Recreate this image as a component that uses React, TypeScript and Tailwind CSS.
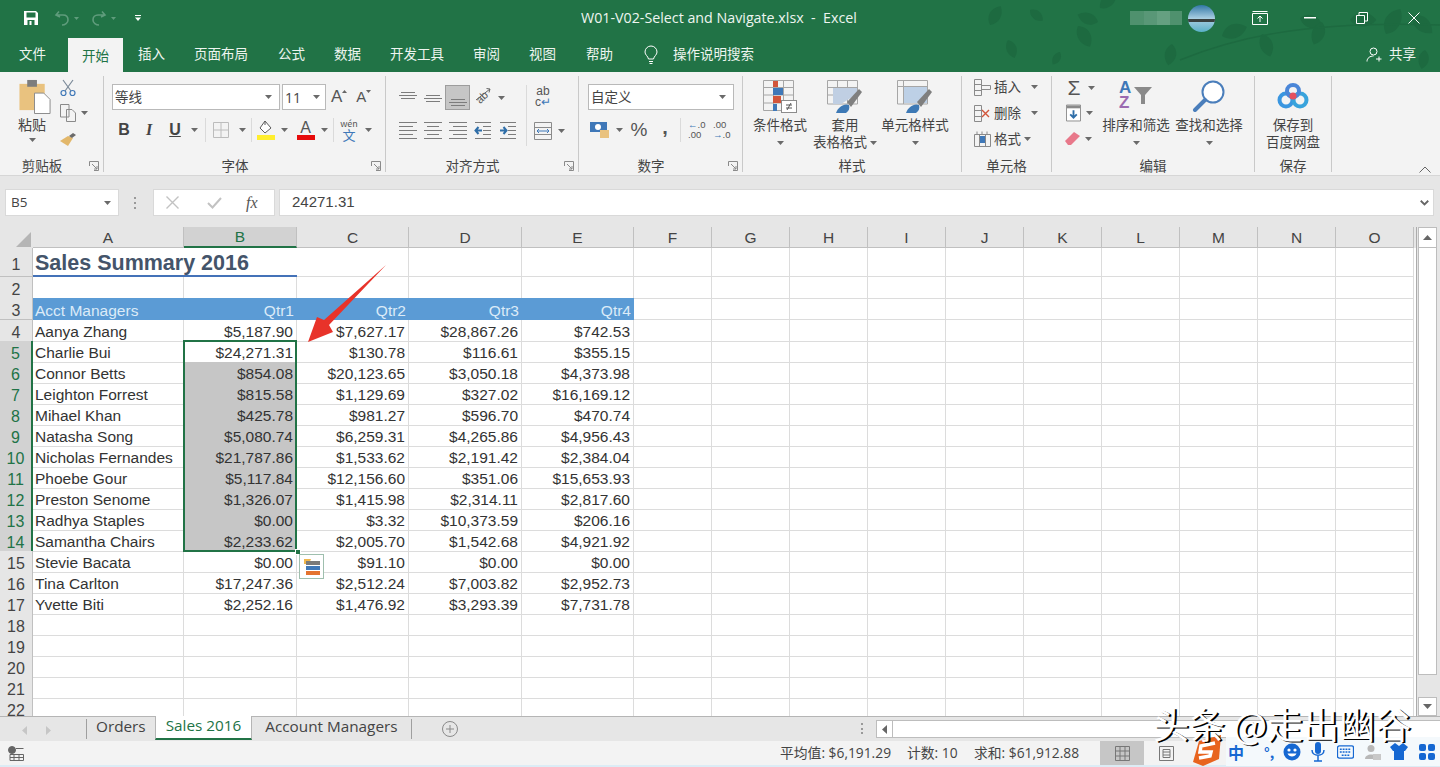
const leaves = [
  [990, 25, 300, 0.9], [1008, 40, 70, 0.8], [1030, 10, 40, 0.7], [1078, 26, 60, 1], [1098, 22, 200, 0.9],
  [1100, 8, 320, 0.9], [1172, 44, 100, 0.9], [1222, 36, 340, 1.1], [1262, 34, 70, 1], [1300, 18, 20, 1],
  [1322, 22, 110, 1], [1350, 20, 0, 1.1], [1386, 34, 300, 1.2], [1412, 16, 40, 1.1], [1425, 50, 100, 0.8], [1060, 52, 120, 0.6],
];

const names = [
  ['Aanya Zhang', '$5,187.90', '$7,627.17', '$28,867.26', '$742.53'],
  ['Charlie Bui', '$24,271.31', '$130.78', '$116.61', '$355.15'],
  ['Connor Betts', '$854.08', '$20,123.65', '$3,050.18', '$4,373.98'],
  ['Leighton Forrest', '$815.58', '$1,129.69', '$327.02', '$16,169.12'],
  ['Mihael Khan', '$425.78', '$981.27', '$596.70', '$470.74'],
  ['Natasha Song', '$5,080.74', '$6,259.31', '$4,265.86', '$4,956.43'],
  ['Nicholas Fernandes', '$21,787.86', '$1,533.62', '$2,191.42', '$2,384.04'],
  ['Phoebe Gour', '$5,117.84', '$12,156.60', '$351.06', '$15,653.93'],
  ['Preston Senome', '$1,326.07', '$1,415.98', '$2,314.11', '$2,817.60'],
  ['Radhya Staples', '$0.00', '$3.32', '$10,373.59', '$206.16'],
  ['Samantha Chairs', '$2,233.62', '$2,005.70', '$1,542.68', '$4,921.92'],
  ['Stevie Bacata', '$0.00', '$91.10', '$0.00', '$0.00'],
  ['Tina Carlton', '$17,247.36', '$2,512.24', '$7,003.82', '$2,952.73'],
  ['Yvette Biti', '$2,252.16', '$1,476.92', '$3,293.39', '$7,731.78'],
];

const gridCols = 'grid grid-cols-[33px_151px_113px_112px_113px_112px_78px_78px_78px_78px_78px_78px_78px_78px_78px_78px]';
const columns = ['A', 'B', 'C', 'D', 'E', 'F', 'G', 'H', 'I', 'J', 'K', 'L', 'M', 'N', 'O'];

const Caret = ({ className = '' }: { className?: string }) => (
  <svg viewBox="0 0 7 4" className={`h-[4px] w-[7px] shrink-0 ${className}`}>
    <path d="M0 0H7L3.5 4Z" fill="#6a6a6a" />
  </svg>
);

const Launcher = () => (
  <svg viewBox="0 0 10 10" className="absolute bottom-[4px] right-[4px] h-[10px] w-[10px]" fill="none" stroke="#8a8a8a">
    <path d="M.5 5V.5H9.5V9.5H5M3 3L8 8M8 5V8H5" />
  </svg>
);

const Sep = () => <div className="mt-[4px] h-[96px] w-px shrink-0 bg-[#c9c9c9]" />;
const MiniSep = () => <div className="h-[24px] w-px shrink-0 bg-[#dadada]" />;

const Group = ({ className, label, launcher, children }: { className: string; label: string; launcher?: boolean; children: React.ReactNode }) => (
  <div className={`relative h-full shrink-0 ${className}`}>
    <div className="flow-root h-[84px]">{children}</div>
    <div className={`h-[20px] text-center leading-[20px] text-[#444] ${launcher ? 'pr-[19px]' : ''}`}>{label}</div>
    {launcher && <Launcher />}
  </div>
);

const Lines = ({ rows }: { rows: [number, number, number][] }) => (
  <svg viewBox="0 0 18 18" className="h-[18px] w-[18px]" stroke="#7c7c7c" strokeWidth="1">
    {rows.map(([x1, x2, y], i) => <line key={i} x1={x1} x2={x2} y1={y + 0.5} y2={y + 0.5} />)}
  </svg>
);

const Indent = ({ flip }: { flip?: boolean }) => (
  <svg viewBox="0 0 18 18" className="h-[18px] w-[18px]" stroke="#7c7c7c">
    <path d="M1 1.5H17M9 5.5H17M9 9.5H17M9 13.5H17M1 17.5H17" />
    <path d={flip ? 'M8 9.5H2M4.5 6L1.5 9.5L4.5 13' : 'M1 9.5H7M4.5 6L7.5 9.5L4.5 13'} stroke="#2f6ea8" strokeWidth="2" fill="none" />
  </svg>
);

const Slot = ({ className, children }: { className: string; children: React.ReactNode }) => (
  <span className={`flex shrink-0 items-center justify-center ${className}`}>{children}</span>
);

const BigButton = ({ className, icon, lines, caretInline }: { className: string; icon: React.ReactNode; lines: string[]; caretInline?: boolean }) => (
  <div className={`flex shrink-0 flex-col items-center pt-[8px] leading-[17px] text-[#444] ${className}`}>
    <div className="flex h-[37px] items-start justify-center">{icon}</div>
    {lines.map((l, i) => (
      <div key={i} className="flex items-center gap-[3px] whitespace-nowrap">
        {l}
        {caretInline && i === 1 && <Caret />}
      </div>
    ))}
    {lines.length === 1 && <div className="flex h-[17px] items-center"><Caret /></div>}
  </div>
);

const CondIcon = () => (
  <svg viewBox="0 0 34 36" className="h-[36px] w-[34px]" fill="none">
    <path d="M.5.5H30.5V30.5H.5ZM.5 7.5H30.5M.5 15H30.5M.5 23H30.5M10.5.5V30.5M20.5.5V30.5" stroke="#a6a6a6" />
    <rect x="10" y="1" width="5" height="6" fill="#d2553a" />
    <rect x="10" y="8" width="10" height="7" fill="#3f78b8" />
    <rect x="10" y="16" width="8" height="7" fill="#d2553a" />
    <rect x="10" y="24" width="4" height="7" fill="#3f78b8" />
    <rect x="18.5" y="20.5" width="15" height="12" fill="#fff" stroke="#8c8c8c" />
    <path d="M23 25H29M23 28H29M28 23L24 30" stroke="#555" />
  </svg>
);

const TableBrush = () => (
  <svg viewBox="0 0 36 36" className="h-[36px] w-[36px]" fill="none">
    <path d="M.5.5H30.5V24H.5ZM.5 7.5H30.5M.5 15H30.5M10.5.5V24M20.5.5V24" stroke="#a6a6a6" />
    <path d="M6 8H30V14L14 24H6Z" fill="#c0cfe3" />
    <path d="M20 22L32 9L35 12L24 27Z" fill="#7f7f7f" />
    <path d="M9 33C11 27 17 23 22 25C23 28 22 31 19 33Z" fill="#3e79b5" />
  </svg>
);

const CellBrush = () => (
  <svg viewBox="0 0 36 36" className="h-[36px] w-[36px]" fill="none">
    <path d="M.5.5H30.5V24H.5ZM.5 6.5H30.5M6.5.5V24" stroke="#a6a6a6" />
    <rect x="7" y="7" width="23" height="16" fill="#bdd0e6" />
    <path d="M20 22L32 9L35 12L24 27Z" fill="#7f7f7f" />
    <path d="M9 33C11 27 17 23 22 25C23 28 22 31 19 33Z" fill="#3e79b5" />
  </svg>
);

export default function App() {
  return (
    <div className="relative flex h-screen w-full flex-col overflow-hidden bg-white font-['Open_Sans','Noto_Sans_CJK_SC',sans-serif] text-[13.5px]">
      {/* Title bar + tabs */}
      <div className="relative h-[72px] shrink-0 bg-[#217346] text-[#eef5f0]">
        <svg viewBox="0 0 1440 72" className="absolute inset-0 h-[72px] w-[1440px]" fill="#1d6a40">
          {leaves.map(([x, y, r, s], i) => (
            <path key={i} d="M0 0C6 -9 17 -9 24 0C17 8 6 8 0 0Z" transform={`translate(${x} ${y}) rotate(${r}) scale(${s})`} />
          ))}
          <path d="M1180 60C1230 40 1300 20 1440 25" fill="none" stroke="#1d6a40" strokeWidth="1.5" />
        </svg>
        <div className="relative flex h-[36px] items-center">
          <div className="flex items-center pl-[23px]">
            <svg viewBox="0 0 16 16" className="h-[16px] w-[16px]" fill="none">
              <path d="M1 1H13L15 3V15H1Z" fill="#fff" />
              <rect x="3.5" y="2.5" width="9" height="5" fill="#217346" />
              <rect x="4.5" y="10" width="7" height="5" fill="#217346" />
              <rect x="6.5" y="11" width="2" height="4" fill="#fff" />
            </svg>
            <svg viewBox="0 0 16 16" className="ml-[15px] h-[16px] w-[16px]" fill="none" stroke="#5f9c7c" strokeWidth="1.6">
              <path d="M5 1.5L2 5L6 7M2.5 5H9C12 5 14 7 14 10S11 15 8 15" />
            </svg>
            <svg viewBox="0 0 5 3" className="ml-[4px] h-[3px] w-[5px]" fill="#5f9c7c"><path d="M0 0H5L2.5 3Z" /></svg>
            <svg viewBox="0 0 16 16" className="ml-[12px] h-[16px] w-[16px]" fill="none" stroke="#5f9c7c" strokeWidth="1.6">
              <path d="M11 1.5L14 5L10 7M13.5 5H7C4 5 2 7 2 10S5 15 8 15" />
            </svg>
            <svg viewBox="0 0 5 3" className="ml-[4px] h-[3px] w-[5px]" fill="#5f9c7c"><path d="M0 0H5L2.5 3Z" /></svg>
            <svg viewBox="0 0 6 6" className="ml-[19px] h-[6px] w-[6px]" fill="#fff"><path d="M0 0H6V1H0ZM0 2.5H6L3 6Z" /></svg>
          </div>
          <div className="absolute left-[581px] top-[6px] whitespace-pre text-[14.25px] leading-[24px]">W01-V02-Select and Navigate.xlsx  -  Excel</div>
          <div className="ml-auto flex items-center">
            <div className="flex h-[14px] w-[52px] items-stretch opacity-60">
              <div className="w-[14px] bg-[#6fa58a]" />
              <div className="w-[13px] bg-[#7fb098]" />
              <div className="w-[13px] bg-[#93bfa9]" />
              <div className="w-[12px] bg-[#6fa58a]" />
            </div>
            <div className="ml-[6px] h-[27px] w-[27px] overflow-hidden rounded-full bg-gradient-to-b from-[#2f78a6] via-[#a9cfe2] to-[#58b0c8]">
              <div className="mt-[14px] h-[3px] w-full bg-[#39403f]" />
            </div>
            <svg viewBox="0 0 16 14" className="ml-[37px] h-[14px] w-[16px]" fill="none" stroke="#fff">
              <path d="M.5 2.5H15.5V13.5H.5ZM.5.5H15.5M8 11V5M5.5 7.5L8 5L10.5 7.5" />
            </svg>
            <svg viewBox="0 0 12 2" className="ml-[36px] h-[2px] w-[12px]"><rect width="12" height="1.5" fill="#fff" /></svg>
            <svg viewBox="0 0 12 12" className="ml-[40px] h-[12px] w-[12px]" fill="none" stroke="#fff">
              <path d="M.5 3.5H8.5V11.5H.5ZM3 3V.5H11.5V9H9" />
            </svg>
            <svg viewBox="0 0 12 12" className="ml-[40px] mr-[20px] h-[12px] w-[12px]" fill="none" stroke="#fff">
              <path d="M.5.5L11.5 11.5M11.5.5L.5 11.5" />
            </svg>
          </div>
        </div>
        <div className="relative flex h-[36px] items-end pl-[5px]">
          <div className="mr-[8px] px-[14px] pb-[8px]">文件</div>
          <div className="h-[34px] bg-[#f3f3f3] px-[14px] pt-[8px] text-[#217346]">开始</div>
          <div className="ml-px px-[14px] pb-[8px]">插入</div>
          <div className="ml-px px-[14px] pb-[8px]">页面布局</div>
          <div className="ml-[2px] px-[14px] pb-[8px]">公式</div>
          <div className="ml-px px-[14px] pb-[8px]">数据</div>
          <div className="ml-px px-[14px] pb-[8px]">开发工具</div>
          <div className="ml-px px-[14px] pb-[8px]">审阅</div>
          <div className="ml-px px-[14px] pb-[8px]">视图</div>
          <div className="ml-[2px] px-[14px] pb-[8px]">帮助</div>
          <svg viewBox="0 0 16 20" className="mb-[7px] ml-[16px] h-[20px] w-[16px]" fill="none" stroke="#fff">
            <path d="M5.5 14C5 11 2 10 2 7A6 6 0 0 1 14 7C14 10 11 11 10.5 14ZM6 16.5H10M6.5 18.5H9.5" />
          </svg>
          <div className="ml-[14px] pb-[8px]">操作说明搜索</div>
          <div className="ml-auto flex items-center pb-[8px] pr-[24px]">
            <svg viewBox="0 0 16 16" className="mr-[7px] h-[16px] w-[16px]" fill="none" stroke="#fff">
              <path d="M4 5.5A3.5 3.5 0 1 1 11 5.5A3.5 3.5 0 1 1 4 5.5ZM1 15.5C1 12 4 10 7.5 10M10 13H15.5M13 10.5V15.5" />
            </svg>
            共享
          </div>
        </div>
      </div>

      {/* Ribbon */}
      <div className="relative flex h-[104px] shrink-0 border-b border-[#d6d6d6] bg-[#f3f3f3]">
        <Group className="w-[103px]" label="剪贴板" launcher>
          <div className="flex">
            <div className="flex w-[57px] flex-col items-center pl-[7px] pt-[7px] leading-[17px] text-[#444]">
              <svg viewBox="0 0 32 36" className="ml-[5px] h-[35px] w-[32px]">
                <path d="M0 5H26V32H0Z" fill="#e9c27f" />
                <rect x="8" y="1" width="10" height="7" fill="#7d7d7d" />
                <path d="M15.5 14.5H25L31.5 21V35.5H15.5Z" fill="#fff" stroke="#8a8a8a" />
              </svg>
              <div className="mt-[2px] text-[14px]">粘贴</div>
              <Caret className="mt-[5px]" />
            </div>
            <div className="flex w-[46px] flex-col pl-[1px] pt-[7px]">
              <svg viewBox="0 0 16 18" className="ml-[2px] h-[18px] w-[16px]" fill="none" stroke="#7c8a99" strokeWidth="1.2">
                <path d="M3 1L11 12M13 1L5 12" />
                <circle cx="3.5" cy="14" r="2.5" stroke="#3f78b8" />
                <circle cx="12.5" cy="14" r="2.5" stroke="#3f78b8" />
              </svg>
              <div className="mt-[7px] flex items-center gap-[5px]">
                <svg viewBox="0 0 16 18" className="ml-[2px] h-[18px] w-[16px]" fill="none" stroke="#8a8a8a">
                  <path d="M.5.5H9V13H.5ZM6.5 5.5H12L15.5 9V17.5H6.5Z" fill="#f3f3f3" />
                </svg>
                <Caret />
              </div>
              <svg viewBox="0 0 18 16" className="ml-[1px] mt-[10px] h-[16px] w-[18px]">
                <path d="M1 9L9 14L14 6L9 4Z" fill="#e2b76a" />
                <path d="M10 4L14 1L17 3L13 6Z" fill="#6a6a6a" />
              </svg>
            </div>
          </div>
        </Group>
        <Sep />

        <Group className="w-[281px]" label="字体" launcher>
          <div className="mt-[12px] flex h-[26px] items-center pl-[8px] text-[#444]">
            <div className="flex h-[26px] w-[168px] items-center justify-between border border-[#b9b9b9] bg-white pl-[2px] pr-[7px]">等线<Caret /></div>
            <div className="ml-[2px] flex h-[26px] w-[44px] items-center justify-between border border-[#b9b9b9] bg-white pl-[2px] pr-[5px] text-[14px]">11<Caret /></div>
            <div className="ml-[5px] flex items-start">
              <span className="font-['Liberation_Sans'] text-[17px] leading-[20px] text-[#555]">A</span>
              <svg viewBox="0 0 5 3" className="mt-[3px] h-[3px] w-[5px]" fill="#666"><path d="M0 3H5L2.5 0Z" /></svg>
              <span className="ml-[9px] font-['Liberation_Sans'] text-[15px] leading-[20px] text-[#555]">A</span>
              <svg viewBox="0 0 5 3" className="mt-[3px] h-[3px] w-[5px]" fill="#666"><path d="M0 0H5L2.5 3Z" /></svg>
            </div>
          </div>
          <div className="mt-[8px] flex h-[24px] items-center pl-[8px] font-['Liberation_Sans'] text-[16px] text-[#444]">
            <Slot className="w-[24px]"><b>B</b></Slot>
            <Slot className="w-[26px]"><i className="font-['Liberation_Serif'] font-bold">I</i></Slot>
            <Slot className="w-[26px]"><span className="font-bold underline">U</span></Slot>
            <Slot className="w-[12px]"><Caret /></Slot>
            <Slot className="ml-[5px] w-[1px]"><MiniSep /></Slot>
            <Slot className="ml-[6px] w-[18px]">
              <svg viewBox="0 0 16 16" className="h-[16px] w-[16px]" fill="none" stroke="#bcbcbc"><path d="M.5.5H15.5V15.5H.5ZM8 .5V15.5M.5 8H15.5" /></svg>
            </Slot>
            <Slot className="ml-[6px] w-[13px]"><Caret /></Slot>
            <Slot className="ml-[2px] w-[1px]"><MiniSep /></Slot>
            <Slot className="ml-[4px] w-[20px]">
              <svg viewBox="0 0 18 20" className="h-[20px] w-[18px]" fill="none">
                <path d="M8 1L14 8L8 13L3 8Z" stroke="#5b5b5b" fill="#fff" />
                <path d="M8 1V5" stroke="#5b5b5b" />
                <rect y="15" width="18" height="5" fill="#ffee2e" />
              </svg>
            </Slot>
            <Slot className="ml-[3px] w-[10px]"><Caret /></Slot>
            <Slot className="ml-[7px] w-[19px]">
              <div className="flex flex-col items-center leading-[13px]">
                <span className="text-[16px] text-[#555]">A</span>
                <div className="mt-[1px] h-[5px] w-[18px] bg-[#e60b0b]" />
              </div>
            </Slot>
            <Slot className="ml-[4px] w-[10px]"><Caret /></Slot>
            <Slot className="ml-[4px] w-[1px]"><MiniSep /></Slot>
            <Slot className="ml-[5px] w-[20px]">
              <div className="flex flex-col items-center font-['Noto_Sans_CJK_SC'] leading-none">
                <span className="text-[9px] leading-[9px] text-[#555]">wén</span>
                <span className="text-[13px] leading-[13px] text-[#3f78b8]">文</span>
              </div>
            </Slot>
            <Slot className="ml-[4px] w-[10px]"><Caret /></Slot>
          </div>
        </Group>
        <Sep />

        <Group className="w-[192px]" label="对齐方式" launcher>
          <div className="flex">
            <div className="w-[140px] pl-[9px]">
              <div className="mt-[13px] flex h-[25px] items-center">
                <Slot className="w-[25px]"><Lines rows={[[2, 16, 3], [0, 18, 6], [2, 16, 9]]} /></Slot>
                <Slot className="w-[25px]"><Lines rows={[[2, 16, 6], [0, 18, 9], [2, 16, 12]]} /></Slot>
                <Slot className="h-[25px] w-[25px] border border-[#9d9d9d] bg-[#c6c6c6]"><Lines rows={[[2, 16, 10], [0, 18, 13], [2, 16, 16]]} /></Slot>
                <Slot className="relative w-[24px]">
                  <span className="-rotate-45 font-['Liberation_Sans'] text-[11px] leading-[11px] text-[#555]">ab</span>
                  <svg viewBox="0 0 18 18" className="absolute left-[3px] top-[-9px] h-[18px] w-[18px]" fill="none" stroke="#666">
                    <path d="M3 17L17 6M13.5 5.5L17 6L16 9.5" />
                  </svg>
                </Slot>
                <Slot className="ml-[2px] w-[10px]"><Caret /></Slot>
              </div>
              <div className="mt-[11px] flex h-[18px] items-center">
                <Slot className="w-[25px]"><Lines rows={[[0, 18, 1], [0, 14, 5], [0, 18, 9], [0, 14, 13], [0, 18, 17]]} /></Slot>
                <Slot className="w-[25px]"><Lines rows={[[0, 18, 1], [3, 15, 5], [0, 18, 9], [3, 15, 13], [0, 18, 17]]} /></Slot>
                <Slot className="w-[25px]"><Lines rows={[[0, 18, 1], [4, 18, 5], [0, 18, 9], [4, 18, 13], [0, 18, 17]]} /></Slot>
                <Slot className="w-[25px]"><Indent flip /></Slot>
                <Slot className="w-[26px]"><Indent /></Slot>
              </div>
            </div>
            <div className="mt-[13px] h-[61px] w-px bg-[#dadada]" />
            <div className="pl-[1px]">
              <div className="mt-[14px] flex w-[30px] flex-col items-center font-['Liberation_Sans'] text-[12px] leading-[11px] text-[#555]">
                <span>ab</span>
                <span>c<span className="text-[#3f78b8]">↵</span></span>
              </div>
              <div className="mt-[14px] flex items-center gap-[6px] pl-[6px]">
                <svg viewBox="0 0 18 18" className="h-[18px] w-[18px]" fill="none" stroke="#8a8a8a">
                  <path d="M.5.5H17.5V17.5H.5ZM.5 5.5H17.5M.5 12.5H17.5" />
                  <path d="M3 9H15M5 7L3 9L5 11M13 7L15 9L13 11" stroke="#3f78b8" />
                </svg>
                <Caret />
              </div>
            </div>
          </div>
        </Group>
        <Sep />

        <Group className="w-[163px]" label="数字" launcher>
          <div className="ml-[9px] mt-[12px] flex h-[26px] w-[146px] items-center justify-between border border-[#b9b9b9] bg-white pl-[2px] pr-[7px] text-[#444]">自定义<Caret /></div>
          <div className="mt-[8px] flex h-[24px] items-center pl-[10px] font-['Liberation_Sans'] text-[#555]">
            <Slot className="w-[22px]">
              <svg viewBox="0 0 20 18" className="h-[18px] w-[20px]">
                <rect x="0" y="1" width="17" height="10" fill="#3f78b8" />
                <circle cx="8" cy="6" r="3" fill="#fff" />
                <rect x="10" y="9" width="9" height="8" fill="#e9c27f" />
              </svg>
            </Slot>
            <Slot className="ml-[2px] w-[12px]"><Caret /></Slot>
            <Slot className="ml-[3px] w-[22px] text-[19px]">%</Slot>
            <Slot className="ml-[4px] w-[22px] text-[20px] font-bold"><span className="-mt-[6px]">,</span></Slot>
            <Slot className="ml-[4px] w-[1px]"><MiniSep /></Slot>
            <div className="ml-[7px] flex w-[24px] flex-col text-[9.5px] leading-[10px]">
              <span><span className="text-[#3f78b8]">←</span>.0</span>
              <span>.00</span>
            </div>
            <div className="ml-px flex w-[24px] flex-col text-[9.5px] leading-[10px]">
              <span>.00</span>
              <span><span className="text-[#3f78b8]">→</span>.0</span>
            </div>
          </div>
        </Group>
        <Sep />

        <Group className="w-[218px]" label="样式">
          <div className="flex pl-[6px]">
            <BigButton className="w-[62px]" icon={<CondIcon />} lines={['条件格式']} />
            <BigButton className="w-[68px]" icon={<TableBrush />} lines={['套用', '表格格式']} caretInline />
            <BigButton className="w-[72px]" icon={<CellBrush />} lines={['单元格样式']} />
          </div>
        </Group>
        <Sep />

        <Group className="w-[89px]" label="单元格">
          <div className="flex flex-col gap-[6px] pl-[12px] pt-[5px] leading-[20px] text-[#444]">
            <div className="flex items-center">
              <svg viewBox="0 0 17 17" className="h-[17px] w-[17px]" fill="none" stroke="#8a8a8a"><path d="M.5.5H7.5V16.5H.5ZM.5 5.5H7.5M.5 11.5H7.5M7.5 6.5H16.5V10.5H7.5Z" /></svg>
              <span className="ml-[3px]">插入</span><Caret className="ml-[10px]" />
            </div>
            <div className="flex items-center">
              <svg viewBox="0 0 17 17" className="h-[17px] w-[17px]" fill="none" stroke="#8a8a8a"><path d="M.5.5H7.5V16.5H.5ZM.5 5.5H7.5M.5 11.5H7.5" /><path d="M8 5L15 12M15 5L8 12" stroke="#d2553a" strokeWidth="1.4" /></svg>
              <span className="ml-[3px]">删除</span><Caret className="ml-[10px]" />
            </div>
            <div className="flex items-center">
              <svg viewBox="0 0 17 17" className="h-[17px] w-[17px]" fill="none" stroke="#8a8a8a"><path d="M.5 3.5H16.5V15.5H.5ZM5.5 3.5V15.5M11.5 3.5V15.5M3 .5V3M8 .5V3M13 .5V3" /><rect x="6" y="5" width="5" height="7" fill="#3f78b8" stroke="none" /></svg>
              <span className="ml-[3px]">格式</span><Caret className="ml-[3px]" />
            </div>
          </div>
        </Group>
        <Sep />

        <Group className="w-[202px]" label="编辑">
          <div className="flex">
            <div className="flex w-[48px] flex-col pl-[13px] pt-[7px]">
              <div className="flex h-[17px] items-center gap-[5px]">
                <span className="w-[18px] text-center font-['Liberation_Sans'] text-[21px] leading-[17px] text-[#555]">Σ</span><Caret />
              </div>
              <div className="mt-[8px] flex items-center gap-[5px]">
                <svg viewBox="0 0 16 18" className="ml-px h-[18px] w-[15px]" fill="none">
                  <path d="M.5.5H15.5V17.5H.5Z" stroke="#8a8a8a" fill="#fff" />
                  <rect x="1" y="1" width="14" height="3" fill="#8a8a8a" />
                  <path d="M8 6V14M4.5 10.5L8 14L11.5 10.5" stroke="#2f6ea8" strokeWidth="2" />
                </svg>
                <Caret />
              </div>
              <div className="mt-[9px] flex items-center gap-[4px]">
                <svg viewBox="0 0 16 15" className="h-[15px] w-[16px]"><path d="M0 10L9 1L15 5L6 14H3Z" fill="#e8788a" /></svg>
                <Caret />
              </div>
            </div>
            <BigButton
              className="w-[72px]"
              icon={
                <div className="relative h-[36px] w-[34px] font-['Liberation_Sans'] text-[17px] font-bold leading-[15px]">
                  <div className="text-[#3f78b8]">A</div>
                  <div className="text-[#9b6bb0]">Z</div>
                  <svg viewBox="0 0 18 17" className="absolute left-[15px] top-[7px] h-[17px] w-[18px]"><path d="M0 0H18L11 8V17H7V8Z" fill="#8a8a8a" /></svg>
                </div>
              }
              lines={['排序和筛选']}
            />
            <BigButton
              className="w-[74px]"
              icon={
                <svg viewBox="0 0 34 32" className="h-[32px] w-[34px]" fill="none">
                  <circle cx="21" cy="12" r="10.5" stroke="#4a7ebb" strokeWidth="2" fill="#fff" />
                  <path d="M13 20L3 30" stroke="#4a7ebb" strokeWidth="4" strokeLinecap="round" />
                </svg>
              }
              lines={['查找和选择']}
            />
          </div>
        </Group>
        <Sep />

        <Group className="w-[76px]" label="保存">
          <BigButton
            className=""
            icon={
              <svg viewBox="0 0 32 26" className="mt-[3px] h-[26px] w-[32px]" fill="none" strokeWidth="4">
                <circle cx="9" cy="17" r="6.5" stroke="#3a96e0" />
                <circle cx="23" cy="17" r="6.5" stroke="#38a3dc" />
                <circle cx="16" cy="8" r="6" stroke="#4a86d8" />
                <circle cx="16" cy="13" r="3.5" fill="#e5505e" stroke="none" />
              </svg>
            }
            lines={['保存到', '百度网盘']}
          />
        </Group>
        <Sep />
        <svg viewBox="0 0 12 7" className="absolute bottom-[2px] right-[9px] h-[7px] w-[12px]" fill="none" stroke="#666"><path d="M.5 6.5L6 1L11.5 6.5" /></svg>
      </div>

      {/* Formula bar */}
      <div className="flex h-[51px] shrink-0 items-center bg-[#e6e6e6] pl-[5px] pr-[6px] pt-[2px] text-[#444]">
        <div className="flex h-[27px] w-[114px] items-center justify-between border border-[#d9d9d9] bg-white pl-[5px] pr-[7px]">B5<Caret /></div>
        <div className="ml-[15px] flex h-[12px] w-[3px] flex-col justify-between">
          <span className="h-[2px] w-[2px] bg-[#999]" /><span className="h-[2px] w-[2px] bg-[#999]" /><span className="h-[2px] w-[2px] bg-[#999]" />
        </div>
        <div className="ml-[16px] flex h-[27px] w-[122px] items-center border border-[#d9d9d9] bg-white">
          <Slot className="ml-[11px] w-[14px]">
            <svg viewBox="0 0 13 13" className="h-[13px] w-[13px]" fill="none" stroke="#c2c2c2" strokeWidth="1.4"><path d="M.5.5L12.5 12.5M12.5.5L.5 12.5" /></svg>
          </Slot>
          <Slot className="ml-[27px] w-[16px]">
            <svg viewBox="0 0 15 12" className="h-[12px] w-[15px]" fill="none" stroke="#c2c2c2" strokeWidth="2"><path d="M1 6L5.5 10.5L14 1" /></svg>
          </Slot>
          <span className="ml-[24px] font-['Liberation_Serif'] text-[16px] italic text-[#555]">fx</span>
        </div>
        <div className="ml-[4px] flex h-[27px] min-w-0 flex-1 items-center justify-between border border-[#d9d9d9] bg-white pl-[12px] pr-[3px] font-['Liberation_Sans'] text-[15px]">
          24271.31
          <svg viewBox="0 0 12 8" className="h-[6px] w-[11px]" fill="none" stroke="#666" strokeWidth="2.4"><path d="M1 1L6 6L11 1" /></svg>
        </div>
      </div>

      {/* Sheet */}
      <div className="relative flex min-h-0 flex-1 overflow-hidden font-['Liberation_Sans','Noto_Sans_CJK_SC',sans-serif] text-[15.5px] leading-none text-[#333]">
        <div className="w-[1417px] shrink-0 overflow-hidden border-r border-[#ababab]">
          <div className={`${gridCols} h-[21px] bg-[#e6e6e6] text-[#444]`}>
            <div className="relative">
              <svg viewBox="0 0 15 15" className="absolute bottom-[1px] right-[2px] h-[15px] w-[15px]"><path d="M15 0V15H0Z" fill="#b5b5b5" /></svg>
            </div>
            {columns.map((c) => (
              <div key={c} className={`flex h-[21px] items-center justify-center border-r border-b border-[#c0c0c0] pt-px ${c === 'B' ? 'border-b-2 border-b-[#217346] bg-[#d2d2d2] text-[#217346]' : ''}`}>{c}</div>
            ))}
          </div>
          <SheetRow n={1} h="h-[29px]">
            <div className="col-span-2 flex items-center border-b-2 border-[#4472b8] pl-[2px] pt-[5px] text-[21.5px] font-bold text-[#44546a]">Sales Summary 2016</div>
            <Blank count={13} />
          </SheetRow>
          <SheetRow n={2} h="h-[21px]"><Blank count={15} /></SheetRow>
          <SheetRow n={3} h="h-[22px]">
            {['Acct Managers', 'Qtr1', 'Qtr2', 'Qtr3', 'Qtr4'].map((t, i) => (
              <div key={t} className={`flex items-center bg-[#5b9bd5] pt-[3px] text-[#dcebf8] ${i === 0 ? 'pl-[2px]' : 'justify-end pr-[3px]'}`}>{t}</div>
            ))}
            <Blank count={10} />
          </SheetRow>
          {Array.from({ length: 19 }, (_, i) => {
            const d = names[i];
            const n = i + 4;
            const inRange = n >= 5 && n <= 14;
            return (
              <SheetRow key={n} n={n} h="h-[21px]" active={inRange}>
                {d
                  ? d.map((t, j) => (
                      <div
                        key={j}
                        className={`flex items-center overflow-hidden whitespace-nowrap border-r border-b pt-[3px] ${j === 0 ? 'justify-start pl-[2px]' : 'justify-end pr-[3px]'} ${j === 1 && n >= 6 && n <= 14 ? 'border-[#b0b0b0] bg-[#c6c6c6]' : 'border-[#dcdcdc]'}`}
                      >
                        {t}
                      </div>
                    ))
                  : <Blank count={5} />}
                <Blank count={10} />
              </SheetRow>
            );
          })}
        </div>

        {/* Vertical scrollbar */}
        <div className="flex w-[23px] shrink-0 flex-col bg-[#e6e6e6] pl-px pr-[3px]">
          <div className="flex h-[21px] items-center justify-center border border-[#bdbdbd] bg-white">
            <svg viewBox="0 0 9 5" className="h-[5px] w-[9px]"><path d="M0 5H9L4.5 0Z" fill="#666" /></svg>
          </div>
          <div className="h-[427px] border-x border-b border-[#bdbdbd] bg-white" />
          <div className="flex-1" />
          <div className="flex h-[19px] items-center justify-center border border-[#bdbdbd] bg-white">
            <svg viewBox="0 0 9 5" className="h-[5px] w-[9px]"><path d="M0 0H9L4.5 5Z" fill="#666" /></svg>
          </div>
        </div>

        {/* Selection */}
        <div className="absolute left-[183px] top-[113px] h-[212px] w-[114px] border-2 border-[#217346]" />
        <div className="absolute left-[295px] top-[322px] h-[6px] w-[6px] border border-white bg-[#217346]" />
        <div className="absolute left-[299px] top-[327px] flex h-[25px] w-[25px] items-center justify-center border border-[#9fbfae] bg-white">
          <svg viewBox="0 0 18 18" className="h-[18px] w-[18px]">
            <path d="M1 1L8 1L6 6H1Z" fill="#f0b64c" />
            <rect x="3" y="3" width="14" height="4" fill="#7a7a7a" />
            <rect x="3" y="8" width="14" height="4" fill="#3f78b8" />
            <rect x="3" y="13" width="14" height="4" fill="#e4732f" />
          </svg>
        </div>
      </div>

      {/* Sheet tabs */}
      <div className="flex h-[25px] shrink-0 border-t border-[#b5b5b5] bg-[#e6e6e6] text-[15.3px] text-[#444]">
        <svg viewBox="0 0 5 9" className="ml-[22px] mt-[9px] h-[9px] w-[5px]"><path d="M5 0V9L0 4.5Z" fill="#c6c6c6" /></svg>
        <svg viewBox="0 0 5 9" className="ml-[19px] mt-[9px] h-[9px] w-[5px]"><path d="M0 0V9L5 4.5Z" fill="#c6c6c6" /></svg>
        <div className="ml-[35px] mt-[2px] h-[20px] w-px bg-[#9f9f9f]" />
        <div className="px-[9px] leading-[18px]">Orders</div>
        <div className="mt-[-1px] flex h-[24px] items-start border-x border-b-2 border-[#b5b5b5] border-b-[#217346] bg-white px-[10px] leading-[19px] text-[#217346]">Sales 2016</div>
        <div className="px-[13px] leading-[18px]">Account Managers</div>
        <div className="mt-[2px] h-[20px] w-px bg-[#9f9f9f]" />
        <svg viewBox="0 0 18 18" className="ml-[29px] mt-[3px] h-[18px] w-[18px]" fill="none" stroke="#8a8a8a"><circle cx="9" cy="9" r="7.5" /><path d="M5 9H13M9 5V13" /></svg>
        <div className="ml-[402px] mt-[6px] flex h-[11px] flex-col justify-between">
          <span className="h-[2px] w-[2px] bg-[#999]" /><span className="h-[2px] w-[2px] bg-[#999]" /><span className="h-[2px] w-[2px] bg-[#999]" />
        </div>
        <div className="ml-[13px] mt-[3px] flex h-[18px] w-[17px] items-center justify-center border border-[#bdbdbd] bg-white">
          <svg viewBox="0 0 5 9" className="h-[9px] w-[5px]"><path d="M5 0V9L0 4.5Z" fill="#666" /></svg>
        </div>
        <div className="mt-[3px] h-[18px] flex-1 border-y border-[#bdbdbd] bg-white" />
      </div>

      {/* Status bar */}
      <div className="flex h-[24px] shrink-0 items-center bg-[#f3f3f3] text-[13.8px] text-[#444]">
        <svg viewBox="0 0 16 15" className="ml-[8px] h-[15px] w-[16px]" fill="none" stroke="#666">
          <circle cx="4" cy="4" r="3.5" fill="#666" />
          <path d="M8 2.5H15.5M2 8.5H15.5V14.5H2ZM6 8.5V14.5M11 8.5V14.5M2 11.5H15.5" />
        </svg>
        <span className="ml-[756px] w-[111px] whitespace-nowrap">平均值: $6,191.29</span>
        <span className="ml-[16px] w-[51px] whitespace-nowrap">计数: 10</span>
        <span className="ml-[16px] w-[106px] whitespace-nowrap">求和: $61,912.88</span>
        <div className="ml-[20px] flex h-[24px] w-[44px] items-center justify-center bg-[#c6c6c6]">
          <svg viewBox="0 0 15 15" className="h-[15px] w-[15px]" fill="none" stroke="#777"><path d="M.5.5H14.5V14.5H.5ZM5 .5V14.5M10 .5V14.5M.5 5H14.5M.5 10H14.5" /></svg>
        </div>
        <svg viewBox="0 0 15 15" className="ml-[15px] h-[15px] w-[15px]" fill="none" stroke="#777"><path d="M.5.5H14.5V14.5H.5ZM4 3.5H11V11.5H4ZM4 6H11M4 9H11" /></svg>
      </div>
      <div className="h-[2px] shrink-0 bg-[#dcecf5]" />

      {/* Arrow annotation */}
      <svg viewBox="0 0 90 90" className="absolute left-[304px] top-[262px] h-[90px] w-[90px]">
        <path d="M82 3L25 63L29 70L4 80L13 55L20 58Z" fill="#e8332a" />
      </svg>

      {/* IME bar */}
      <div className="absolute bottom-[1px] left-[1226px] flex h-[29px] w-[214px] items-center bg-[#f4f9fc] pl-[2px] font-['Noto_Sans_CJK_SC',sans-serif]">
        <span className="text-[16px] font-bold leading-none text-[#1668d2]">中</span>
        <span className="ml-[20px] w-[11px] text-[14px] font-bold leading-none text-[#1668d2]">°,</span>
        <svg viewBox="0 0 18 18" className="ml-[8px] h-[18px] w-[18px]"><circle cx="9" cy="9" r="8.5" fill="#1668d2" /><circle cx="6" cy="7" r="1.6" fill="#fff" /><circle cx="12" cy="7" r="1.6" fill="#fff" /><path d="M4.5 10.5C6 14.5 12 14.5 13.5 10.5Z" fill="#fff" /></svg>
        <svg viewBox="0 0 14 20" className="ml-[10px] h-[20px] w-[14px]" fill="none"><rect x="4" y="0" width="6" height="12" rx="3" fill="#1668d2" /><path d="M1 8C1 15 13 15 13 8M7 14V19M3 19H11" stroke="#1668d2" strokeWidth="1.5" /></svg>
        <svg viewBox="0 0 18 14" className="ml-[12px] h-[14px] w-[17px]" fill="none" stroke="#1668d2"><rect x=".5" y=".5" width="17" height="13" rx="2" strokeWidth="1.4" /><path d="M3 4H15M3 7H15M5 10.5H13" strokeWidth="1.6" strokeDasharray="2 1" /></svg>
        <svg viewBox="0 0 16 16" className="ml-[11px] h-[16px] w-[16px]"><circle cx="6" cy="4.5" r="3.5" fill="#b8b8b8" /><path d="M0 15C0 9 12 9 12 15Z" fill="#b8b8b8" /><rect x="8" y="10" width="8" height="6" fill="#c8c8c8" /></svg>
        <svg viewBox="0 0 18 17" className="ml-[9px] h-[17px] w-[18px]"><path d="M5 0L9 3L13 0L18 4L15 8H14V17H4V8H3L0 4Z" fill="#1668d2" /></svg>
        <svg viewBox="0 0 16 16" className="ml-[11px] h-[16px] w-[16px]" fill="#1668d2"><rect width="7" height="7" rx="2" /><rect x="9" width="7" height="7" rx="2" /><rect y="9" width="7" height="7" rx="2" /><rect x="9" y="9" width="7" height="7" rx="2" /></svg>
      </div>
      <svg viewBox="0 0 28 32" className="absolute left-[1193px] top-[735px] h-[32px] w-[28px]">
        <path d="M6 6L28 0L26 24L10 31L0 27Z" fill="#e8641e" />
        <path d="M22 8L8 11L7 17L18 17L17 21L6 23" fill="none" stroke="#fff" strokeWidth="3.5" />
      </svg>

      {/* Watermark */}
      <div className="absolute left-[1153px] top-[701px] whitespace-nowrap font-['Noto_Sans_CJK_SC',sans-serif] text-[36px] leading-[44px] text-white [text-shadow:2px_1px_0_#000]">
        头条 @走出幽谷
      </div>
    </div>
  );
}

function Blank({ count }: { count: number }) {
  return (
    <>
      {Array.from({ length: count }, (_, i) => (
        <div key={i} className="border-r border-b border-[#dcdcdc]" />
      ))}
    </>
  );
}

function SheetRow({ n, h, active, children }: { n: number; h: string; active?: boolean; children: React.ReactNode }) {
  return (
    <div className={`${gridCols} ${h}`}>
      <div className={`flex items-center justify-center border-r border-b border-[#c0c0c0] pt-[5px] text-[16px] ${active ? 'border-r-2 border-r-[#217346] bg-[#d2d2d2] text-[#217346]' : 'bg-[#e6e6e6] text-[#444]'}`}>{n}</div>
      {children}
    </div>
  );
}
